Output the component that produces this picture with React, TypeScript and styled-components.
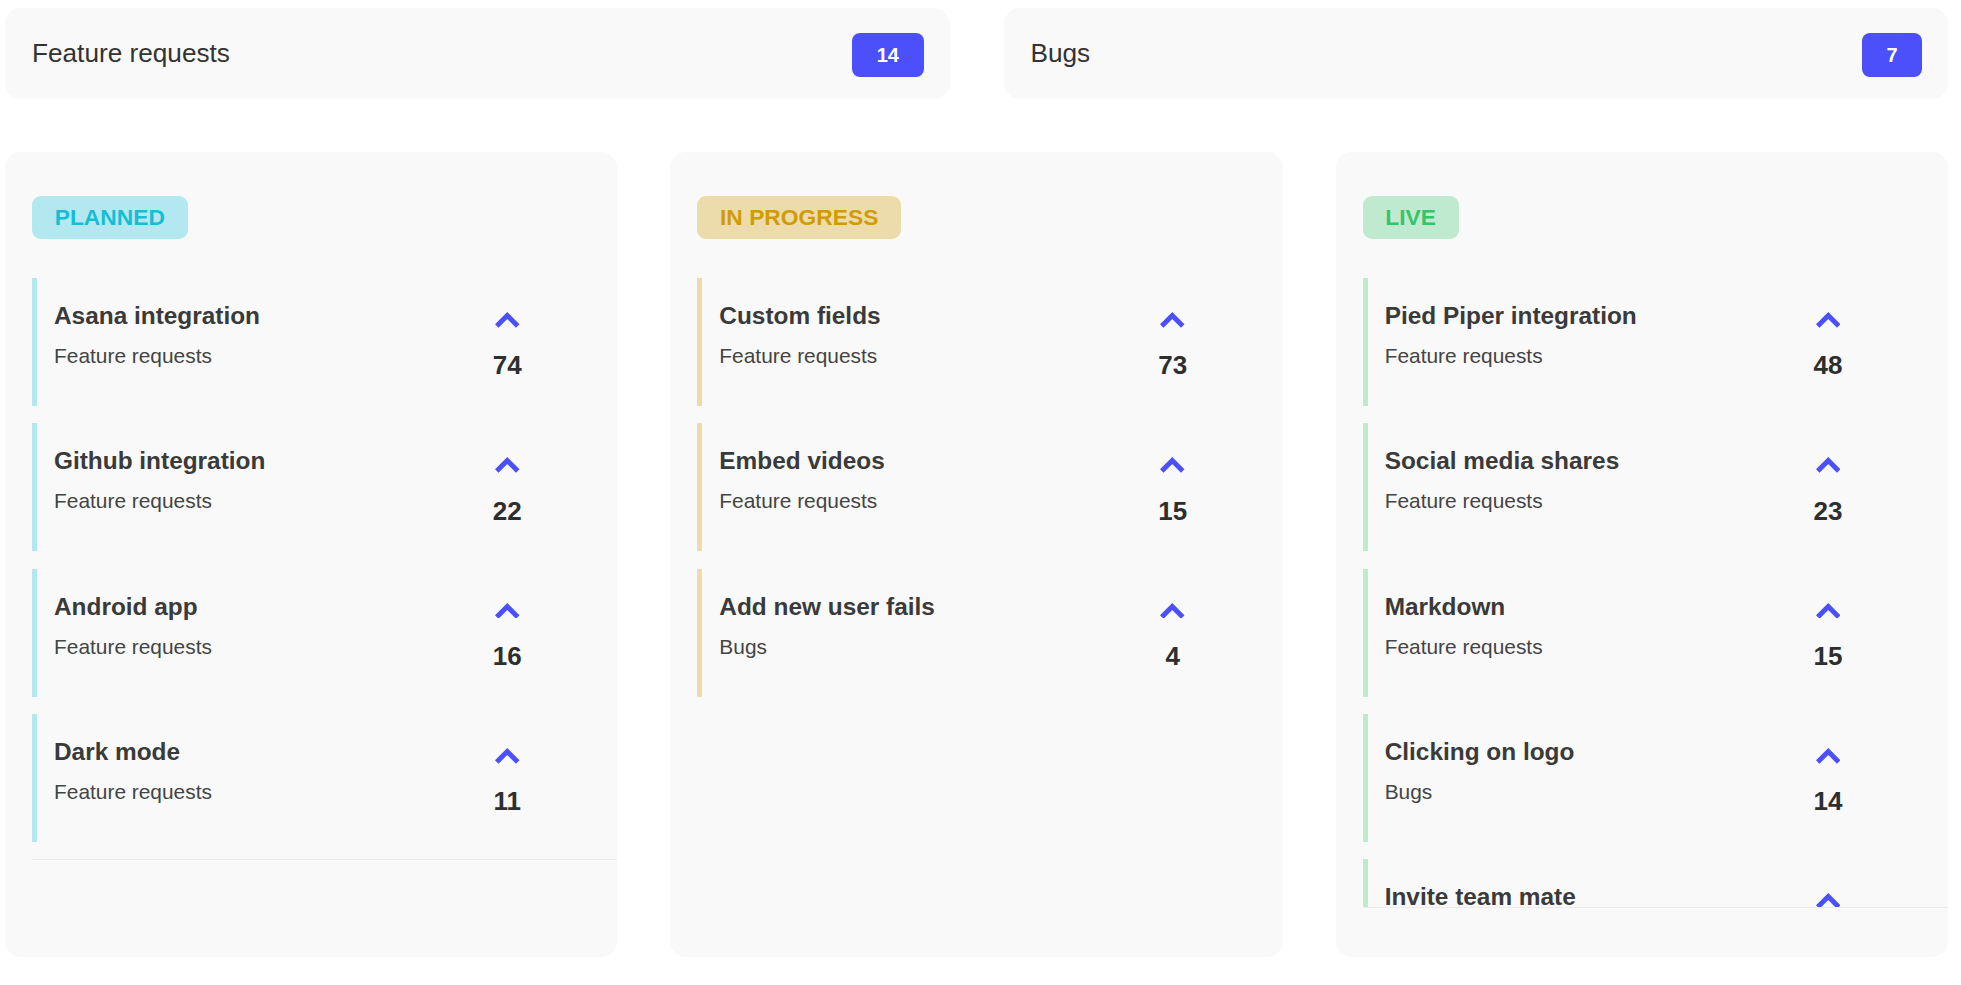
import React from "react";
import styled, { createGlobalStyle } from "styled-components";

const GlobalStyle = createGlobalStyle`
  html, body { margin: 0; padding: 0; background: #ffffff; }
  body { font-family: "Liberation Sans", Arial, sans-serif; }
  * { box-sizing: border-box; }
`;

const Page = styled.div`
  display: flex;
  flex-direction: column;
  gap: 53px;
  padding: 8px 13px 28px 5px;
`;

const TopRow = styled.div`
  display: grid;
  grid-template-columns: 1fr 1fr;
  gap: 54px;
`;

const SummaryCard = styled.div`
  height: 91px;
  background: #f9f9f9;
  border-radius: 16px;
  display: flex;
  align-items: center;
  justify-content: space-between;
  padding: 0 26px 0 27px;
`;

const SummaryTitle = styled.span`
  font-size: 26.2px;
  color: #333333;
`;

const CountBadge = styled.span`
  height: 44px;
  padding: 0 24.5px;
  margin-top: 3px;
  background: #4b50fb;
  color: #ffffff;
  font-size: 20px;
  font-weight: 700;
  border-radius: 8px;
  display: flex;
  align-items: center;
`;

const Board = styled.div`
  display: grid;
  grid-template-columns: repeat(3, 1fr);
  gap: 53px;
`;

const Column = styled.section`
  height: 805px;
  background: #f9f9f9;
  border-radius: 16px;
  padding: 44px 0 49px 27px;
  display: flex;
  flex-direction: column;
`;

const StatusPill = styled.span<{ $bg: string; $fg: string }>`
  align-self: flex-start;
  height: 43px;
  padding: 0 22.7px;
  border-radius: 9px;
  background: ${(p) => p.$bg};
  color: ${(p) => p.$fg};
  font-size: 22.8px;
  font-weight: 700;
  display: flex;
  align-items: center;
  margin-bottom: 39px;
`;

const List = styled.div<{ $divided: boolean; $overflowing: boolean }>`
  max-height: 630px;
  overflow: hidden;
  padding-right: ${(p) => (p.$overflowing ? "10px" : "0")};
  border-bottom: 1px solid ${(p) => (p.$divided ? "#ebebeb" : "transparent")};
`;

const Item = styled.div<{ $accent: string }>`
  display: flex;
  align-items: flex-start;
  justify-content: space-between;
  height: 128px;
  flex-shrink: 0;
  margin-bottom: 17.25px;
  border-left: 5px solid ${(p) => p.$accent};
  padding-left: 17px;
`;

const ItemText = styled.div`
  padding-top: 24px;
  display: flex;
  flex-direction: column;
`;

const ItemTitle = styled.span`
  font-size: 24.4px;
  font-weight: 700;
  color: #3a3a3a;
  margin-bottom: 14.2px;
`;

const ItemCategory = styled.span`
  font-size: 20.9px;
  color: #444444;
`;

const Vote = styled.div`
  width: 60px;
  margin-right: 80px;
  padding-top: 34px;
  display: flex;
  flex-direction: column;
  align-items: center;
`;

const VoteCount = styled.span`
  margin-top: 22.5px;
  font-size: 26px;
  font-weight: 700;
  color: #2e2e2e;
`;

const Chevron = () => (
  <svg width="24.5" height="15.8" viewBox="0 0 24.5 15.8" style={{ display: "block" }}>
    <polyline
      points="1.77,14.04 12.25,3.54 22.73,14.04"
      fill="none"
      stroke="#4b50fb"
      strokeWidth="5"
      strokeLinecap="butt"
      strokeLinejoin="miter"
    />
  </svg>
);

type Entry = { title: string; category: string; votes: number };

const columns: { label: string; bg: string; fg: string; entries: Entry[] }[] = [
  {
    label: "PLANNED",
    bg: "#b3e8f1",
    fg: "#17bdd4",
    entries: [
      { title: "Asana integration", category: "Feature requests", votes: 74 },
      { title: "Github integration", category: "Feature requests", votes: 22 },
      { title: "Android app", category: "Feature requests", votes: 16 },
      { title: "Dark mode", category: "Feature requests", votes: 11 },
    ],
  },
  {
    label: "IN PROGRESS",
    bg: "#ecdcab",
    fg: "#d09b05",
    entries: [
      { title: "Custom fields", category: "Feature requests", votes: 73 },
      { title: "Embed videos", category: "Feature requests", votes: 15 },
      { title: "Add new user fails", category: "Bugs", votes: 4 },
    ],
  },
  {
    label: "LIVE",
    bg: "#bfead0",
    fg: "#34c46a",
    entries: [
      { title: "Pied Piper integration", category: "Feature requests", votes: 48 },
      { title: "Social media shares", category: "Feature requests", votes: 23 },
      { title: "Markdown", category: "Feature requests", votes: 15 },
      { title: "Clicking on logo", category: "Bugs", votes: 14 },
      { title: "Invite team mate", category: "Feature requests", votes: 9 },
    ],
  },
];

export default function App() {
  return (
    <>
      <GlobalStyle />
      <Page>
        <TopRow>
          <SummaryCard>
            <SummaryTitle>Feature requests</SummaryTitle>
            <CountBadge>14</CountBadge>
          </SummaryCard>
          <SummaryCard>
            <SummaryTitle>Bugs</SummaryTitle>
            <CountBadge>7</CountBadge>
          </SummaryCard>
        </TopRow>
        <Board>
          {columns.map((col) => (
            <Column key={col.label}>
              <StatusPill $bg={col.bg} $fg={col.fg}>
                {col.label}
              </StatusPill>
              <List $divided={col.entries.length >= 4} $overflowing={col.entries.length > 4}>
                {col.entries.map((e) => (
                  <Item key={e.title} $accent={col.bg}>
                    <ItemText>
                      <ItemTitle>{e.title}</ItemTitle>
                      <ItemCategory>{e.category}</ItemCategory>
                    </ItemText>
                    <Vote>
                      <Chevron />
                      <VoteCount>{e.votes}</VoteCount>
                    </Vote>
                  </Item>
                ))}
              </List>
            </Column>
          ))}
        </Board>
      </Page>
    </>
  );
}
